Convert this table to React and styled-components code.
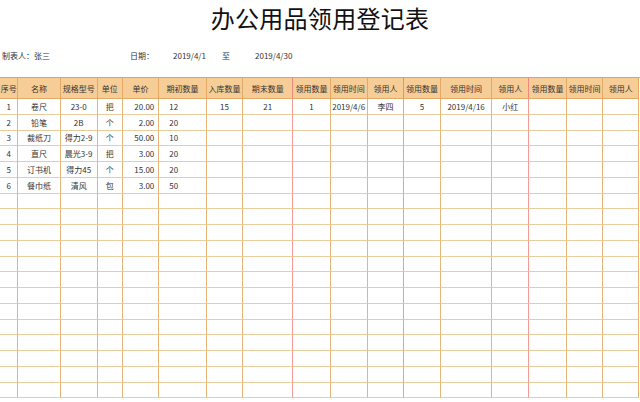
import React from "react";
import styled, { createGlobalStyle } from "styled-components";

const GlobalStyle = createGlobalStyle`
  body {
    margin: 0;
    background: #ffffff;
    font-family: "Noto Sans CJK SC", "Noto Sans", sans-serif;
    color: #333333;
  }
`;

const Page = styled.div`
  width: 640px;
  height: 402px;
  overflow: hidden;
  background: #ffffff;
`;

const Title = styled.h1`
  margin: 0;
  height: 36px;
  line-height: 36px;
  font-size: 24px;
  font-weight: 400;
  text-align: center;
  color: #111111;
  letter-spacing: 0.3px;
`;

const InfoBar = styled.div`
  display: flex;
  height: 14px;
  line-height: 14px;
  margin-top: 13px;
  padding-left: 2px;
  font-size: 8px;
  color: #333333;
`;

const InfoItem = styled.span`
  width: ${(p) => (p.$w ? `${p.$w}px` : "auto")};
  flex: none;
`;

const Grid = styled.div`
  display: grid;
  grid-template-columns: 18.3px 42.4px 37px 25px 36.6px 47.4px 36.6px 50px 37.4px 37px 36.6px 36.7px 51.3px 37px 37.4px 36.6px 36px;
  margin-top: 14px;
  border-top: 1px solid #e0a55c;
`;

const HeadCell = styled.div`
  height: 21px;
  box-sizing: border-box;
  display: flex;
  align-items: center;
  justify-content: center;
  white-space: nowrap;
  background: #f6cd96;
  font-size: 8px;
  color: #333333;
  border-bottom: 1px solid #e2aa66;
  border-right: 1px solid ${(p) => (p.$red ? "#f08a80" : "#e2aa66")};
`;

const Cell = styled.div`
  height: 15.75px;
  box-sizing: border-box;
  display: flex;
  align-items: center;
  justify-content: ${(p) =>
    p.$align === "right" ? "flex-end" : p.$align === "left" ? "flex-start" : "center"};
  padding: ${(p) =>
    p.$align === "right" ? "0 4px 0 0" : p.$align === "left" ? "0 0 0 10px" : "0"};
  white-space: nowrap;
  font-size: 8px;
  color: #333333;
  border-bottom: 1px solid #ebcc9f;
  border-right: 1px solid ${(p) => (p.$red ? "#f59a92" : "#e3b677")};
`;

const headers = [
  "序号", "名称", "规格型号", "单位", "单价", "期初数量", "入库数量", "期末数量",
  "领用数量", "领用时间", "领用人", "领用数量", "领用时间", "领用人",
  "领用数量", "领用时间", "领用人",
];

// columns whose right edge is the red group separator
const redCols = [7, 10, 13];

const aligns = {
  4: "right",
  5: "left",
};

const data = [
  ["1", "卷尺", "23-0", "把", "20.00", "12", "15", "21", "1", "2019/4/6", "李四", "5", "2019/4/16", "小红"],
  ["2", "铅笔", "2B", "个", "2.00", "20"],
  ["3", "裁纸刀", "得力2-9", "个", "50.00", "10"],
  ["4", "直尺", "晨光3-9", "把", "3.00", "20"],
  ["5", "订书机", "得力45", "个", "15.00", "20"],
  ["6", "餐巾纸", "清风", "包", "3.00", "50"],
];

const TOTAL_ROWS = 19;

export default function App() {
  const rows = Array.from({ length: TOTAL_ROWS }, (_, i) => data[i] || []);

  return (
    <Page>
      <GlobalStyle />
      <Title>办公用品领用登记表</Title>
      <InfoBar>
        <InfoItem $w={128}>制表人：张三</InfoItem>
        <InfoItem $w={43}>日期：</InfoItem>
        <InfoItem $w={49}>2019/4/1</InfoItem>
        <InfoItem $w={33}>至</InfoItem>
        <InfoItem>2019/4/30</InfoItem>
      </InfoBar>
      <Grid>
        {headers.map((h, i) => (
          <HeadCell key={`h${i}`} $red={redCols.includes(i)}>
            {h}
          </HeadCell>
        ))}
        {rows.map((row, r) =>
          headers.map((_, c) => (
            <Cell key={`${r}-${c}`} $red={redCols.includes(c)} $align={aligns[c]}>
              {row[c] || ""}
            </Cell>
          ))
        )}
      </Grid>
    </Page>
  );
}
